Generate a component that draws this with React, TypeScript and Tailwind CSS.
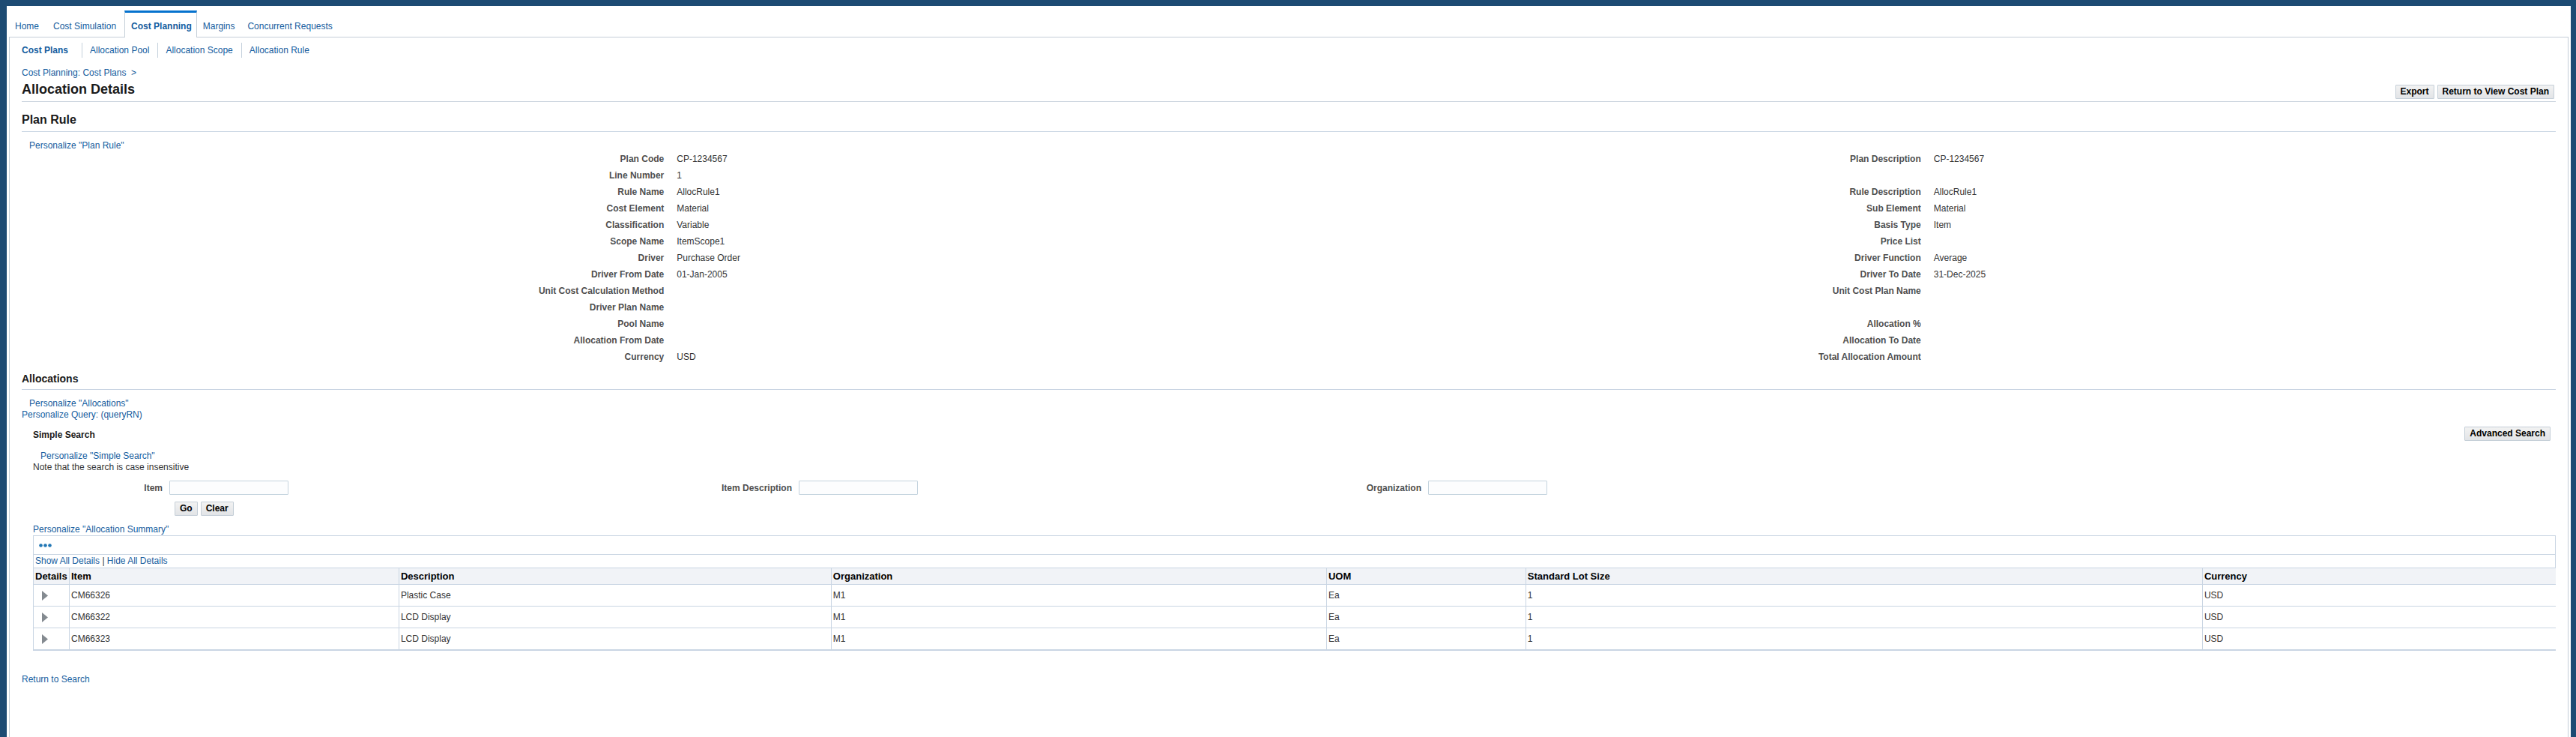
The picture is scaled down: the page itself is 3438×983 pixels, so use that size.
import type { ReactNode } from 'react';

const leftFields = [
  ['Plan Code', 'CP-1234567'],
  ['Line Number', '1'],
  ['Rule Name', 'AllocRule1'],
  ['Cost Element', 'Material'],
  ['Classification', 'Variable'],
  ['Scope Name', 'ItemScope1'],
  ['Driver', 'Purchase Order'],
  ['Driver From Date', '01-Jan-2005'],
  ['Unit Cost Calculation Method', ''],
  ['Driver Plan Name', ''],
  ['Pool Name', ''],
  ['Allocation From Date', ''],
  ['Currency', 'USD'],
];

const rightFields = [
  ['Plan Description', 'CP-1234567'],
  ['', ''],
  ['Rule Description', 'AllocRule1'],
  ['Sub Element', 'Material'],
  ['Basis Type', 'Item'],
  ['Price List', ''],
  ['Driver Function', 'Average'],
  ['Driver To Date', '31-Dec-2025'],
  ['Unit Cost Plan Name', ''],
  ['', ''],
  ['Allocation %', ''],
  ['Allocation To Date', ''],
  ['Total Allocation Amount', ''],
];

const searchFields = [
  { id: 'item', label: 'Item' },
  { id: 'item-description', label: 'Item Description' },
  { id: 'organization', label: 'Organization' },
];

const columns = [
  { title: 'Details', width: 'w-12' },
  { title: 'Item', width: 'w-[13.07%]' },
  { title: 'Description', width: 'w-[17.14%]' },
  { title: 'Organization', width: 'w-[19.64%]' },
  { title: 'UOM', width: 'w-[7.9%]' },
  { title: 'Standard Lot Size', width: 'w-[26.83%]' },
  { title: 'Currency', width: 'w-auto' },
];

const rows = [
  ['CM66326', 'Plastic Case', 'M1', 'Ea', '1', 'USD'],
  ['CM66322', 'LCD Display', 'M1', 'Ea', '1', 'USD'],
  ['CM66323', 'LCD Display', 'M1', 'Ea', '1', 'USD'],
];

function Link({ children, className = '' }: { children: ReactNode; className?: string }) {
  return (
    <a href="#" className={`text-[#145c9e] hover:underline ${className}`}>
      {children}
    </a>
  );
}

function Button({ children }: { children: ReactNode }) {
  return (
    <button
      type="button"
      className="h-[19px] shrink-0 rounded-[1px] border border-[#c4ced7] bg-gradient-to-b from-[#f2f2f2] to-[#e2e4e7] px-1.5 font-bold leading-[17px] text-black"
    >
      {children}
    </button>
  );
}

function FieldList({ fields }: { fields: string[][] }) {
  return (
    <dl>
      {fields.map(([label, value], i) => (
        <div key={i} className="grid h-[22px] grid-cols-2 gap-x-[17px] leading-[22px]">
          <dt className="text-right font-bold text-[#4f4f4f]">{label}</dt>
          <dd className="text-[#333333]">{value}</dd>
        </div>
      ))}
    </dl>
  );
}

function Tabs() {
  return (
    <nav className="flex pt-1.5">
      <div className="flex items-end border-b border-[#c4ced7] pb-1.5">
        <Link className="pl-2 pr-[11px]">Home</Link>
        <Link className="pl-2 pr-[11px]">Cost Simulation</Link>
      </div>
      <div className="border-x border-t-3 border-x-[#c4ced7] border-t-[#0572ce] pb-[7px] pl-2 pr-1.5 pt-[11px] font-bold">
        <Link>Cost Planning</Link>
      </div>
      <div className="flex flex-1 items-end border-b border-[#c4ced7] pb-1.5">
        <Link className="pl-2 pr-[9px]">Margins</Link>
        <Link className="pl-2 pr-[9px]">Concurrent Requests</Link>
      </div>
    </nav>
  );
}

function SubTabs() {
  return (
    <nav className="flex pt-[7px] leading-5">
      <Link className="pr-[18px] font-bold">Cost Plans</Link>
      {['Allocation Pool', 'Allocation Scope', 'Allocation Rule'].map((name) => (
        <Link key={name} className="border-l border-[#c4d0dc] pl-2.5 pr-[11px]">
          {name}
        </Link>
      ))}
    </nav>
  );
}

function SimpleSearch() {
  return (
    <form className="pl-[15px] pr-[7px]" onSubmit={(e) => e.preventDefault()}>
      <div className="mt-2 flex items-end justify-between">
        <h3 className="font-bold text-[#1a1a1a]">Simple Search</h3>
        <Button>Advanced Search</Button>
      </div>
      <div className="mt-[13px] pl-2.5">
        <Link>Personalize "Simple Search"</Link>
      </div>
      <p className="text-[#333333]">Note that the search is case insensitive</p>
      <div className="mt-2.5 grid grid-cols-4">
        {searchFields.map((field) => (
          <div key={field.id} className="flex items-end gap-[9px]">
            <label
              htmlFor={field.id}
              className="w-[173px] text-right font-bold leading-[17px] text-[#4f4f4f]"
            >
              {field.label}
            </label>
            <input
              id={field.id}
              type="text"
              className="h-[19px] w-[159px] rounded-[1px] border border-[#c4d3de] bg-[#fcfdfe] px-1"
            />
          </div>
        ))}
      </div>
      <div className="mt-[9px] flex gap-1 pl-[189px]">
        <Button>Go</Button>
        <Button>Clear</Button>
      </div>
    </form>
  );
}

function AllocationTable() {
  return (
    <div className="ml-[15px]">
      <div className="border-x border-t border-[#c9d5e3]">
        <div className="flex h-6 items-center pl-[7px]">
          <button type="button" aria-label="Table actions">
            <svg width="17" height="5" viewBox="0 0 17 5" fill="#2277b5">
              <circle cx="2.5" cy="2.5" r="2.3" />
              <circle cx="8.5" cy="2.5" r="2.3" />
              <circle cx="14.5" cy="2.5" r="2.3" />
            </svg>
          </button>
        </div>
        <div className="border-t border-[#c9d5e3] pb-px pl-0.5 pt-px">
          <Link>Show All Details</Link> | <Link>Hide All Details</Link>
        </div>
      </div>
      <table className="w-full table-fixed border-separate border-spacing-0 border-b border-l border-[#c9d5e3]">
        <thead>
          <tr className="h-[22px] bg-[#f1f3f7] text-left text-[13px] leading-[18px] text-black">
            {columns.map((col) => (
              <th
                key={col.title}
                scope="col"
                className={`${col.width} whitespace-nowrap border-r border-t border-[#c9d5e3] pl-0.5 last:border-r-0`}
              >
                {col.title}
              </th>
            ))}
          </tr>
        </thead>
        <tbody>
          {rows.map((row) => (
            <tr key={row[0]} className="h-[29px] text-[#333333]">
              <td className="border-r border-t border-[#c9d5e3] pl-[11px]">
                <button type="button" aria-label="Show details" className="block">
                  <svg width="8" height="13" viewBox="0 0 8 13" fill="#848a90">
                    <path d="M0 0L8 6.5L0 13Z" />
                  </svg>
                </button>
              </td>
              {row.map((cell, i) => (
                <td key={i} className="border-r border-t border-[#c9d5e3] pl-0.5 last:border-r-0">
                  {cell}
                </td>
              ))}
            </tr>
          ))}
        </tbody>
        <tfoot>
          <tr className="h-px">
            <td colSpan={7} className="border-t border-[#c9d5e3]" />
          </tr>
        </tfoot>
      </table>
    </div>
  );
}

export default function App() {
  return (
    <div className="flex min-h-screen bg-[#1d4b73] pl-[9px] pr-[7px] pt-2 font-['Liberation_Sans',Arial,sans-serif] text-xs leading-[15px] text-[#333333]">
      <div className="flex flex-1 flex-col bg-white px-[3px]">
        <Tabs />
        <main className="flex-1 border-x border-[#c4ced7] pb-8 pl-4 pr-4">
          <SubTabs />
          <div className="mt-[13px]">
            <Link>
              Cost Planning: Cost Plans &nbsp;&gt;
            </Link>
          </div>
          <div className="flex items-start justify-between border-b border-[#c9d3dd] pr-0.5 pt-0.5">
            <h1 className="pb-1 text-lg font-bold leading-6 text-[#1a1a1a]">Allocation Details</h1>
            <div className="flex gap-1 self-end pb-[3px]">
              <Button>Export</Button>
              <Button>Return to View Cost Plan</Button>
            </div>
          </div>

          <h2 className="mt-3.5 border-b border-[#c9d5e3] pb-[5px] text-base font-bold leading-5 text-[#1a1a1a]">
            Plan Rule
          </h2>
          <div className="mt-[11px] pl-2.5 leading-[14px]">
            <Link>Personalize "Plan Rule"</Link>
          </div>
          <div className="grid grid-cols-2 pl-[27px]">
            <FieldList fields={leftFields} />
            <FieldList fields={rightFields} />
          </div>

          <h2 className="mt-[9px] border-b border-[#c9d5e3] pb-[5px] text-sm font-bold leading-[18px] text-[#1a1a1a]">
            Allocations
          </h2>
          <div className="mt-[11px] pl-2.5">
            <Link>Personalize "Allocations"</Link>
          </div>
          <div>
            <Link>Personalize Query: (queryRN)</Link>
          </div>
          <SimpleSearch />
          <div className="mt-[11px] pl-[15px]">
            <Link>Personalize "Allocation Summary"</Link>
          </div>
          <AllocationTable />
          <div className="mt-[31px]">
            <Link>Return to Search</Link>
          </div>
        </main>
      </div>
    </div>
  );
}
